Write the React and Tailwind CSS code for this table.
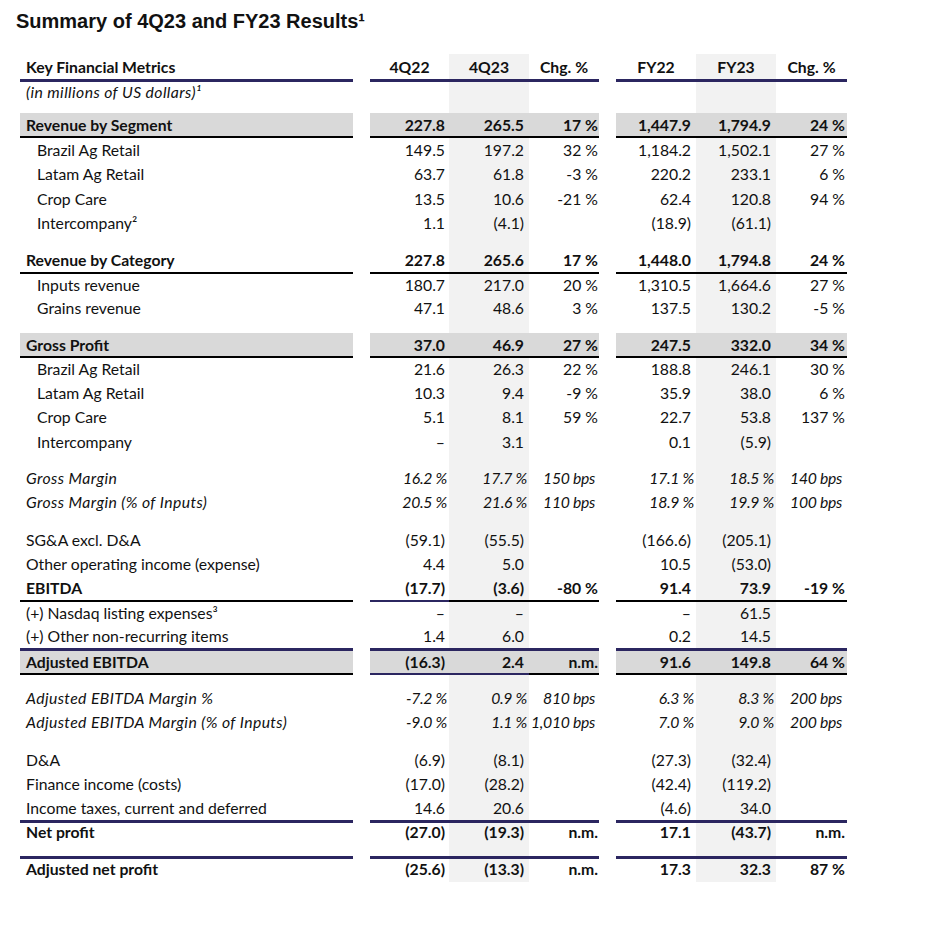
const NAVY = 'bg-[#2b2660]'
const BLACK = 'bg-black'

const cols = [
  { w: 'w-[79px]', pr: 'pr-[4px]', bps: 'pr-[4px]' },
  { w: 'w-[80px]', pr: 'pr-[5px]', bps: 'pr-[5px]', shade: true },
  { w: 'w-[70px]', pr: 'pr-[1px]', bps: 'pr-[4px]' },
  { w: 'w-[80px]', pr: 'pr-[5px]', bps: 'pr-[5px]' },
  { w: 'w-[80px]', pr: 'pr-[5px]', bps: 'pr-[5px]', shade: true },
  { w: 'w-[71px]', pr: 'pr-[2px]', bps: 'pr-[5px]' },
]

const N = 'n'
const K = 'k'
const allNavy = [N, N, N, N, N, N, N]
const allBlack = [K, K, K, K, K, K, K]

const rows = [
  { t: 'head', h: 'h-[25px]' },
  { t: 'line', c: allNavy, h: 'h-[3px]' },
  { t: 'row', h: 'h-[20px]', label: '(in millions of US dollars)¹', italic: true, v: [] },
  { t: 'space', h: 'h-[11px]' },
  { t: 'row', h: 'h-[23px]', label: 'Revenue by Segment', bold: true, shaded: true, v: ['227.8', '265.5', '17 %', '1,447.9', '1,794.9', '24 %'] },
  { t: 'line', c: allBlack, h: 'h-[2px]' },
  { t: 'row', h: 'h-[24px]', label: 'Brazil Ag Retail', indent: true, v: ['149.5', '197.2', '32 %', '1,184.2', '1,502.1', '27 %'] },
  { t: 'row', h: 'h-[24.5px]', label: 'Latam Ag Retail', indent: true, v: ['63.7', '61.8', '-3 %', '220.2', '233.1', '6 %'] },
  { t: 'row', h: 'h-[24.5px]', label: 'Crop Care', indent: true, v: ['13.5', '10.6', '-21 %', '62.4', '120.8', '94 %'] },
  { t: 'row', h: 'h-[24.5px]', label: 'Intercompany²', indent: true, v: ['1.1', '(4.1)', '', '(18.9)', '(61.1)', ''] },
  { t: 'space', h: 'h-[11.5px]' },
  { t: 'row', h: 'h-[25px]', label: 'Revenue by Category', bold: true, v: ['227.8', '265.6', '17 %', '1,448.0', '1,794.8', '24 %'] },
  { t: 'line', c: allBlack, h: 'h-[2px]' },
  { t: 'row', h: 'h-[22px]', label: 'Inputs revenue', indent: true, v: ['180.7', '217.0', '20 %', '1,310.5', '1,664.6', '27 %'] },
  { t: 'row', h: 'h-[24.5px]', label: 'Grains revenue', indent: true, v: ['47.1', '48.6', '3 %', '137.5', '130.2', '-5 %'] },
  { t: 'space', h: 'h-[12.5px]' },
  { t: 'row', h: 'h-[23px]', label: 'Gross Profit', bold: true, shaded: true, v: ['37.0', '46.9', '27 %', '247.5', '332.0', '34 %'] },
  { t: 'line', c: allBlack, h: 'h-[2px]' },
  { t: 'row', h: 'h-[22.5px]', label: 'Brazil Ag Retail', indent: true, v: ['21.6', '26.3', '22 %', '188.8', '246.1', '30 %'] },
  { t: 'row', h: 'h-[24.5px]', label: 'Latam Ag Retail', indent: true, v: ['10.3', '9.4', '-9 %', '35.9', '38.0', '6 %'] },
  { t: 'row', h: 'h-[24.5px]', label: 'Crop Care', indent: true, v: ['5.1', '8.1', '59 %', '22.7', '53.8', '137 %'] },
  { t: 'row', h: 'h-[24.5px]', label: 'Intercompany', indent: true, v: ['–', '3.1', '', '0.1', '(5.9)', ''] },
  { t: 'space', h: 'h-[12px]' },
  { t: 'row', h: 'h-[24px]', label: 'Gross Margin', italic: true, v: ['16.2 %', '17.7 %', '150 bps', '17.1 %', '18.5 %', '140 bps'] },
  { t: 'row', h: 'h-[24px]', label: 'Gross Margin (% of Inputs)', italic: true, v: ['20.5 %', '21.6 %', '110 bps', '18.9 %', '19.9 %', '100 bps'] },
  { t: 'space', h: 'h-[13.5px]' },
  { t: 'row', h: 'h-[24px]', label: 'SG&A excl. D&A', v: ['(59.1)', '(55.5)', '', '(166.6)', '(205.1)', ''] },
  { t: 'row', h: 'h-[24px]', label: 'Other operating income (expense)', v: ['4.4', '5.0', '', '10.5', '(53.0)', ''] },
  { t: 'row', h: 'h-[24.5px]', label: 'EBITDA', bold: true, v: ['(17.7)', '(3.6)', '-80 %', '91.4', '73.9', '-19 %'] },
  { t: 'line', c: [K, N, K, K, K, K, K], h: 'h-[2px]' },
  { t: 'row', h: 'h-[22px]', label: '(+) Nasdaq listing expenses³', v: ['–', '–', '', '–', '61.5', ''] },
  { t: 'row', h: 'h-[24px]', label: '(+) Other non-recurring items', v: ['1.4', '6.0', '', '0.2', '14.5', ''] },
  { t: 'line', c: allNavy, h: 'h-[3px]' },
  { t: 'row', h: 'h-[22px]', label: 'Adjusted EBITDA', bold: true, shaded: true, v: ['(16.3)', '2.4', 'n.m.', '91.6', '149.8', '64 %'] },
  { t: 'line', c: [K, N, N, K, K, K, K], h: 'h-[2px]' },
  { t: 'space', h: 'h-[10.5px]' },
  { t: 'row', h: 'h-[24px]', label: 'Adjusted EBITDA Margin %', italic: true, v: ['-7.2 %', '0.9 %', '810 bps', '6.3 %', '8.3 %', '200 bps'] },
  { t: 'row', h: 'h-[24.5px]', label: 'Adjusted EBITDA Margin (% of Inputs)', italic: true, v: ['-9.0 %', '1.1 %', '1,010 bps', '7.0 %', '9.0 %', '200 bps'] },
  { t: 'space', h: 'h-[14px]' },
  { t: 'row', h: 'h-[24px]', label: 'D&A', v: ['(6.9)', '(8.1)', '', '(27.3)', '(32.4)', ''] },
  { t: 'row', h: 'h-[24px]', label: 'Finance income (costs)', v: ['(17.0)', '(28.2)', '', '(42.4)', '(119.2)', ''] },
  { t: 'row', h: 'h-[23.5px]', label: 'Income taxes, current and deferred', v: ['14.6', '20.6', '', '(4.6)', '34.0', ''] },
  { t: 'line', c: allNavy, h: 'h-[3px]' },
  { t: 'row', h: 'h-[19px]', label: 'Net profit', bold: true, v: ['(27.0)', '(19.3)', 'n.m.', '17.1', '(43.7)', 'n.m.'] },
  { t: 'space', h: 'h-[14.5px]' },
  { t: 'line', c: allNavy, h: 'h-[3px]' },
  { t: 'row', h: 'h-[20px]', label: 'Adjusted net profit', bold: true, v: ['(25.6)', '(13.3)', 'n.m.', '17.3', '32.3', '87 %'] },
  { t: 'space', h: 'h-[3px]' },
]

function Gap() {
  return <div className="w-[17px] shrink-0" />
}

function Line({ c, h }) {
  const color = (x) => (x === N ? NAVY : BLACK)
  return (
    <div className={`flex ${h}`}>
      <div className={`w-[333px] shrink-0 ${color(c[0])}`} />
      <Gap />
      {cols.slice(0, 3).map((col, i) => (
        <div key={i} className={`${col.w} shrink-0 ${color(c[i + 1])}`} />
      ))}
      <Gap />
      {cols.slice(3).map((col, i) => (
        <div key={i} className={`${col.w} shrink-0 ${color(c[i + 4])}`} />
      ))}
    </div>
  )
}

function Space({ h }) {
  return (
    <div className={`flex ${h}`}>
      <div className="w-[333px] shrink-0" />
      <Gap />
      {cols.slice(0, 3).map((col, i) => (
        <div key={i} className={`${col.w} shrink-0 ${col.shade ? 'bg-[#f2f2f2]' : ''}`} />
      ))}
      <Gap />
      {cols.slice(3).map((col, i) => (
        <div key={i} className={`${col.w} shrink-0 ${col.shade ? 'bg-[#f2f2f2]' : ''}`} />
      ))}
    </div>
  )
}

function Cell({ col, value, shaded, center, italic }) {
  const bg = shaded ? 'bg-[#d9d9d9]' : col.shade ? 'bg-[#f2f2f2]' : ''
  let pad = value && value.endsWith('bps') ? col.bps : col.pr
  if (italic && value && value.endsWith('%')) pad = 'pr-[2px]'
  return (
    <div
      className={`${col.w} shrink-0 flex items-center whitespace-nowrap ${
        center ? 'justify-center' : `justify-end ${pad}`
      } ${italic ? 'tracking-[-0.3px]' : ''} ${bg}`}
    >
      {value}
    </div>
  )
}

function Row({ r }) {
  const style = r.bold ? 'font-bold' : r.italic ? 'italic' : ''
  const v = r.v
  return (
    <div className={`flex ${r.h} ${style}`}>
      <div
        className={`w-[333px] shrink-0 flex items-center whitespace-nowrap ${
          r.indent ? 'pl-[17px]' : 'pl-[6px]'
        } ${r.shaded ? 'bg-[#d9d9d9]' : ''} ${r.italic ? 'tracking-[0.4px]' : ''}`}
      >
        {r.label}
      </div>
      <Gap />
      {cols.slice(0, 3).map((col, i) => (
        <Cell key={i} col={col} value={v[i]} shaded={r.shaded} italic={r.italic} />
      ))}
      <Gap />
      {cols.slice(3).map((col, i) => (
        <Cell key={i} col={col} value={v[i + 3]} shaded={r.shaded} italic={r.italic} />
      ))}
    </div>
  )
}

function Header({ h }) {
  const heads = ['4Q22', '4Q23', 'Chg. %', 'FY22', 'FY23', 'Chg. %']
  return (
    <div className={`flex ${h} font-bold`}>
      <div className="w-[333px] shrink-0 flex items-center pl-[6px]">Key Financial Metrics</div>
      <Gap />
      {cols.slice(0, 3).map((col, i) => (
        <Cell key={i} col={col} value={heads[i]} center />
      ))}
      <Gap />
      {cols.slice(3).map((col, i) => (
        <Cell key={i} col={col} value={heads[i + 3]} center />
      ))}
    </div>
  )
}

export default function App() {
  return (
    <div className="w-[941px] h-[936px] bg-white overflow-hidden">
      {/* Title */}
      <div className="h-[54px] pl-[16px] pt-[9px] font-['Liberation_Sans',Arial,sans-serif] text-[20px] leading-[24px] font-bold text-[#111]">
        Summary of 4Q23 and FY23 Results¹
      </div>

      {/* Table */}
      <div className="pl-[20px] font-['Lato',sans-serif] text-[15.75px] text-[#111]">
        {rows.map((r, i) => {
          if (r.t === 'head') return <Header key={i} h={r.h} />
          if (r.t === 'line') return <Line key={i} c={r.c} h={r.h} />
          if (r.t === 'space') return <Space key={i} h={r.h} />
          return <Row key={i} r={r} />
        })}
      </div>
    </div>
  )
}
